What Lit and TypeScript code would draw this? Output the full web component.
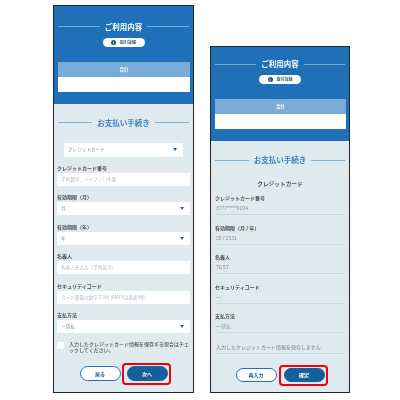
import { LitElement, html, css } from "lit";
import { customElement } from "lit/decorators.js";

const font = css`"Noto Sans CJK JP", "Noto Sans", sans-serif`;

@customElement("app-root")
export class AppRoot extends LitElement {
  static styles = css`
    :host {
      display: flex;
      width: 400px;
      height: 400px;
      box-sizing: border-box;
      padding: 0 0 7px 53px;
      gap: 16px;
      align-items: flex-end;
      background: #fff;
      font-family: ${font};
      color: #444;
    }
    .phone {
      box-sizing: border-box;
      width: 141px;
      border: 1px solid #23272c;
      background: #dfeaee;
    }
    .phone.right { width: 140px; }
    .hero {
      background: #1f70b8;
      padding: 16px 3px 12px;
      display: flex;
      flex-direction: column;
      align-items: stretch;
      filter: blur(0.25px);
    }
    .right .hero { padding: 12px 3px 12px; }
    .head {
      display: flex;
      align-items: center;
      gap: 5px;
      height: 10px;
      line-height: 10px;
      font-size: 7.5px;
      font-weight: 700;
      white-space: nowrap;
    }
    .head::before, .head::after {
      content: "";
      flex: 1;
      height: 1px;
    }
    .hero .head { color: #fff; margin: 0 1px; }
    .hero .head::before, .hero .head::after { background: #74a9d8; }
    .pill {
      align-self: center;
      margin-top: 6px;
      width: 42px;
      height: 9px;
      border-radius: 5px;
      background: #fff;
      display: flex;
      align-items: center;
      justify-content: center;
      gap: 4px;
      font-size: 4px;
      font-weight: 700;
      color: #2f5f88;
      line-height: 9px;
    }
    .dot {
      width: 5px;
      height: 5px;
      border-radius: 50%;
      background: #14558f;
      color: #fff;
      font-size: 4px;
      line-height: 5px;
      text-align: center;
      font-family: "Liberation Sans", sans-serif;
    }
    .table { margin: 15px 0 0 1px; }
    .thead {
      height: 15px;
      line-height: 15px;
      background: #79abd8;
      color: #fff;
      font-size: 4.5px;
      font-weight: 700;
      text-align: center;
    }
    .tbody { height: 15px; background: #fff; }
    .body {
      padding: 14px 3px 11px;
      display: flex;
      flex-direction: column;
      filter: blur(0.25px);
    }
    .right .body { padding: 14px 3px 10px; }
    .body > .head { color: #3b82be; margin: 0 1px; }
    .body > .head::before, .body > .head::after { background: #7fb2d9; }
    .select, .input {
      height: 13px;
      line-height: 13px;
      background: #fff;
      font-size: 4.6px;
      color: #8a8f93;
      padding: 0 4px;
      display: flex;
      align-items: center;
      justify-content: space-between;
      white-space: nowrap;
    }
    .input { color: #b4babd; }
    .select::after {
      content: "";
      width: 0;
      height: 0;
      margin-right: 2px;
      border-left: 2px solid transparent;
      border-right: 2px solid transparent;
      border-top: 3px solid #1a68ad;
    }
    .method {
      margin: 15px 7px 7px;
      height: 14px;
      padding: 0 4px;
    }
    .fields { display: flex; flex-direction: column; gap: 7.5px; }
    .label {
      height: 8px;
      line-height: 8px;
      font-size: 5px;
      font-weight: 700;
      color: #4d5257;
      white-space: nowrap;
    }
    .field { display: flex; flex-direction: column; gap: 1px; }
    .check {
      display: flex;
      gap: 5px;
      margin-top: 9px;
      height: 12px;
    }
    .box { width: 7px; height: 7px; background: #fff; flex: none; }
    .check-text {
      font-size: 5px;
      line-height: 6px;
      font-weight: 500;
      color: #555;
      margin-top: -1px;
    }
    .actions {
      display: flex;
      justify-content: center;
      gap: 6px;
      margin-top: 12px;
    }
    .right .actions { margin-top: 14px; gap: 7px; }
    .btn {
      box-sizing: border-box;
      width: 41px;
      height: 15px;
      line-height: 13px;
      border-radius: 8px;
      border: 1px solid #1f70b8;
      background: #fff;
      color: #1b5e93;
      font-size: 5px;
      font-weight: 700;
      text-align: center;
    }
    .right .btn { height: 14px; line-height: 12px; }
    .btn.primary {
      background: #155f9b;
      border-color: #155f9b;
      color: #fff;
      position: relative;
    }
    .btn.primary::after {
      content: "";
      position: absolute;
      inset: -4px -4px -5px -6px;
      border: 2.5px solid #f00010;
      border-radius: 4px;
    }
    .card-name {
      margin-top: 14px;
      height: 10px;
      line-height: 10px;
      font-size: 5.7px;
      font-weight: 700;
      color: #4d5257;
      text-align: center;
    }
    .list { display: flex; flex-direction: column; gap: 8.5px; margin-top: 5px; padding: 0 1px; }
    .row { display: flex; flex-direction: column; }
    .value {
      height: 13px;
      line-height: 11px;
      box-sizing: border-box;
      border-bottom: 1px solid #c5d9e3;
      padding: 1px 0 0 1px;
      font-size: 5px;
      color: #8f9599;
      font-family: "Liberation Sans", ${font};
      white-space: nowrap;
    }
    .note {
      margin: 8px 1px 0;
      height: 13px;
      line-height: 12px;
      box-sizing: border-box;
      border-bottom: 1px solid #c5d9e3;
      padding-left: 1px;
      font-size: 5px;
      color: #7d8387;
      white-space: nowrap;
    }
  `;

  private hero() {
    return html`<div class="hero">
      <div class="head">ご利用内容</div>
      <div class="pill"><span class="dot">i</span>取引詳細</div>
      <div class="table">
        <div class="thead">合計</div>
        <div class="tbody"></div>
      </div>
    </div>`;
  }

  render() {
    const form: [string, string, string][] = [
      ["クレジットカード番号", "input", "半角数字、ハイフン(-)不要"],
      ["有効期限（月）", "select", "月"],
      ["有効期限（年）", "select", "年"],
      ["名義人", "input", "名義人を入力（半角英字）"],
      ["セキュリティコード", "input", "カード裏面の数字下3桁 (AMEXは表面4桁)"],
      ["支払方法", "select", "一括払"],
    ];
    const confirm: [string, string][] = [
      ["クレジットカード番号", "3777*****0004"],
      ["有効期限（月 / 年）", "05 / 2031"],
      ["名義人", "TEST"],
      ["セキュリティコード", "---"],
      ["支払方法", "一括払"],
    ];
    return html`
      <section class="phone">
        ${this.hero()}
        <div class="body">
          <div class="head">お支払い手続き</div>
          <div class="select method">クレジットカード</div>
          <div class="fields">
            ${form.map(
              ([l, k, v]) => html`<div class="field">
                <div class="label">${l}</div>
                <div class=${k}>${v}</div>
              </div>`
            )}
          </div>
          <div class="check">
            <div class="box"></div>
            <div class="check-text">入力したクレジットカード情報を保存する場合はチェックしてください。</div>
          </div>
          <div class="actions">
            <div class="btn">戻る</div>
            <div class="btn primary">次へ</div>
          </div>
        </div>
      </section>
      <section class="phone right">
        ${this.hero()}
        <div class="body">
          <div class="head">お支払い手続き</div>
          <div class="card-name">クレジットカード</div>
          <div class="list">
            ${confirm.map(
              ([l, v]) => html`<div class="row">
                <div class="label">${l}</div>
                <div class="value">${v}</div>
              </div>`
            )}
          </div>
          <div class="note">入力したクレジットカード情報を保存しません</div>
          <div class="actions">
            <div class="btn">再入力</div>
            <div class="btn primary">確定</div>
          </div>
        </div>
      </section>
    `;
  }
}
